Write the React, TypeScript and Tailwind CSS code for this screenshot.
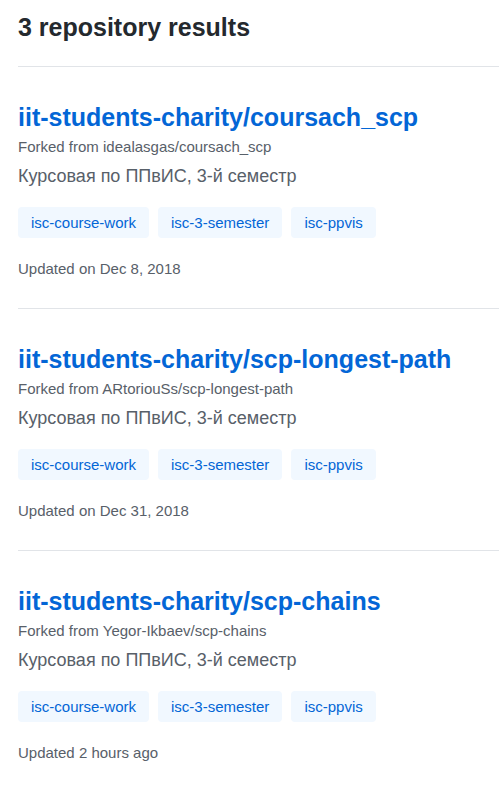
const repos = [
  {
    name: "iit-students-charity/coursach_scp",
    fork: "idealasgas/coursach_scp",
    updated: "Updated on Dec 8, 2018",
  },
  {
    name: "iit-students-charity/scp-longest-path",
    fork: "ARtoriouSs/scp-longest-path",
    updated: "Updated on Dec 31, 2018",
  },
  {
    name: "iit-students-charity/scp-chains",
    fork: "Yegor-Ikbaev/scp-chains",
    updated: "Updated 2 hours ago",
  },
];

const topics = ["isc-course-work", "isc-3-semester", "isc-ppvis"];

export default function App() {
  return (
    <div
      className="min-h-[792px] bg-white pl-[18px] pt-[12px]"
      style={{ fontFamily: '"Liberation Sans", Arial, sans-serif' }}
    >
      <h3 className="text-[25px] leading-[30px] font-bold text-[#24292e] mb-[24px]">
        3 repository results
      </h3>
      <ul>
        {repos.map((r) => (
          <li key={r.name} className="border-t border-[#e1e4e8] pt-[35px] pb-[29px]">
            <a href="#" className="block text-[25px] leading-[30px] font-bold text-[#0366d6]">
              {r.name}
            </a>
            <p className="mt-[5px] text-[15px] leading-[20px] text-[#586069]">
              Forked from {r.fork}
            </p>
            <p className="mt-[7px] text-[18px] leading-[24px] text-[#586069]">
              Курсовая по ППвИС, 3-й семестр
            </p>
            <div className="mt-[19px] flex gap-[9px]">
              {topics.map((t) => (
                <a
                  key={t}
                  href="#"
                  className="flex h-[31px] items-center rounded-[4px] bg-[#f1f8ff] px-[13px] text-[15px] leading-[20px] text-[#0366d6]"
                >
                  {t}
                </a>
              ))}
            </div>
            <p className="mt-[21px] text-[15px] leading-[20px] text-[#586069]">{r.updated}</p>
          </li>
        ))}
      </ul>
    </div>
  );
}
